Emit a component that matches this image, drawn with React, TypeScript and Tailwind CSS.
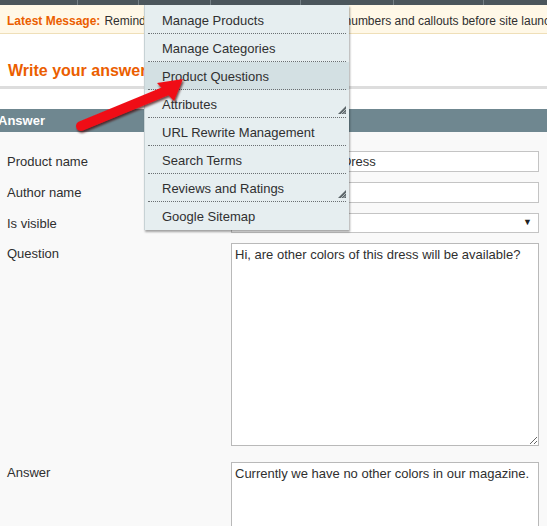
import React from 'react'

const navSeparators = [77, 138, 210, 300, 393, 483]

const menuItems = [
  { label: 'Manage Products' },
  { label: 'Manage Categories' },
  { label: 'Product Questions', active: true },
  { label: 'Attributes', sub: true },
  { label: 'URL Rewrite Management' },
  { label: 'Search Terms' },
  { label: 'Reviews and Ratings', sub: true },
  { label: 'Google Sitemap', last: true },
]

function SubIndicator() {
  return (
    <svg className="absolute right-[3px] bottom-[4px]" width="8" height="8" viewBox="0 0 8 8">
      <polygon points="8,0 8,8 0,8" fill="#5d666a" />
      <line x1="3" y1="8" x2="8" y2="3" stroke="#c9d3d6" strokeWidth="0.8" />
      <line x1="5.5" y1="8" x2="8" y2="5.5" stroke="#c9d3d6" strokeWidth="0.8" />
    </svg>
  )
}

function CatalogMenu() {
  return (
    <div className="absolute left-[144px] top-[5px] w-[205px] pt-[1px] bg-[#e6eef0] border-l border-[#c7d2d5] shadow-[1px_2px_2px_rgba(0,0,0,0.35)]">
      {menuItems.map((item) => (
        <div
          key={item.label}
          className={`relative h-[28px] flex items-center pl-[17px] pt-[2px] ${item.active ? 'bg-[#d3e0e3]' : ''}`}
        >
          <span className="text-[13px] text-[#303030]">{item.label}</span>
          {item.sub && <SubIndicator />}
          {!item.last && (
            <div className="absolute left-[3px] right-[3px] bottom-0 border-b border-dotted border-[#6a6f72]" />
          )}
        </div>
      ))}
    </div>
  )
}

function RedArrow() {
  return (
    <svg className="absolute left-0 top-0 pointer-events-none" width="547" height="526" viewBox="0 0 547 526">
      <defs>
        <filter id="arrowShadow" x="-20%" y="-20%" width="140%" height="160%">
          <feDropShadow dx="1" dy="2" stdDeviation="1.2" floodColor="#3a0000" floodOpacity="0.7" />
        </filter>
      </defs>
      <g filter="url(#arrowShadow)">
        <line x1="81" y1="126" x2="166" y2="91" stroke="#f01018" strokeWidth="10" strokeLinecap="round" />
        <polygon points="183,79 157,83 174,101" fill="#f01018" />
      </g>
    </svg>
  )
}

function FormRow({ label, children, className = '' }: { label: string; children: React.ReactNode; className?: string }) {
  return (
    <div className={`flex ${className}`}>
      <div className="w-[231px] pl-[7px] pt-[2px] leading-[17px] text-[13px] text-[#2f2f2f]">{label}</div>
      <div className="w-[308px]">{children}</div>
    </div>
  )
}

export default function App() {
  return (
    <div className="relative w-[547px] h-[526px] overflow-hidden bg-white font-['Liberation_Sans',Arial,sans-serif] text-[13px] text-[#2f2f2f]">
      {/* top nav strip */}
      <div className="relative h-[5px] bg-[#4b565c]">
        {navSeparators.map((x) => (
          <div key={x} className="absolute top-0 h-[5px] w-px bg-[#758086]" style={{ left: x }} />
        ))}
      </div>

      {/* latest message */}
      <div className="h-[29px] bg-[#fff8e7] border-b border-[#efdfb8] flex items-center pl-[7px] pt-[3px] whitespace-nowrap text-[12px]">
        <span className="font-bold text-[#eb5e00]">Latest Message:</span>
        <span className="ml-[4px] text-[#2f2f2f]">Reminder: Change Magento`s default phone numbers and callouts before site launch</span>
      </div>

      {/* page heading */}
      <div className="h-[52px] pl-[8px] pt-[28px]">
        <h1 className="text-[16px] leading-[18px] font-bold text-[#eb5e00] whitespace-nowrap">Write your answer</h1>
      </div>
      <div className="h-[3px] bg-[#dddddd]" />
      <div className="h-[20px]" />

      {/* fieldset header */}
      <div className="h-[23px] bg-[#6f8790] flex items-center">
        <span className="-ml-[2px] text-[13px] font-bold text-white">Answer</span>
      </div>

      {/* form */}
      <div className="bg-[#f9f9f9] pt-[19px] h-[400px]">
        <FormRow label="Product name">
          <div className="h-[21px] border border-[#c4c4c4] bg-white pl-[0px] flex items-center text-[13px] text-[#2f2f2f] whitespace-nowrap overflow-hidden">
            Women's Summer Dress
          </div>
        </FormRow>
        <FormRow label="Author name" className="mt-[10px]">
          <div className="h-[21px] border border-[#c4c4c4] bg-white" />
        </FormRow>
        <FormRow label="Is visible" className="mt-[10px]">
          <div className="h-[20px] border border-[#c4c4c4] bg-white pr-[6px] flex items-center justify-end">
            <span className="text-[9px] text-[#222]">▼</span>
          </div>
        </FormRow>
        <FormRow label="Question" className="mt-[10px]">
          <textarea
            readOnly
            className="block w-[308px] h-[203px] border border-[#b9b9b9] bg-white px-[3px] py-[1px] text-[13px] text-[#2f2f2f] font-['Liberation_Sans',Arial,sans-serif] outline-none resize"
            value="Hi, are other colors of this dress will be available?"
          />
        </FormRow>
        <FormRow label="Answer" className="mt-[16px]">
          <textarea
            readOnly
            className="block w-[308px] h-[203px] border border-[#b9b9b9] bg-white px-[3px] py-[1px] text-[13px] text-[#2f2f2f] font-['Liberation_Sans',Arial,sans-serif] outline-none resize"
            value="Currently we have no other colors in our magazine."
          />
        </FormRow>
      </div>

      <CatalogMenu />
      <RedArrow />
    </div>
  )
}
